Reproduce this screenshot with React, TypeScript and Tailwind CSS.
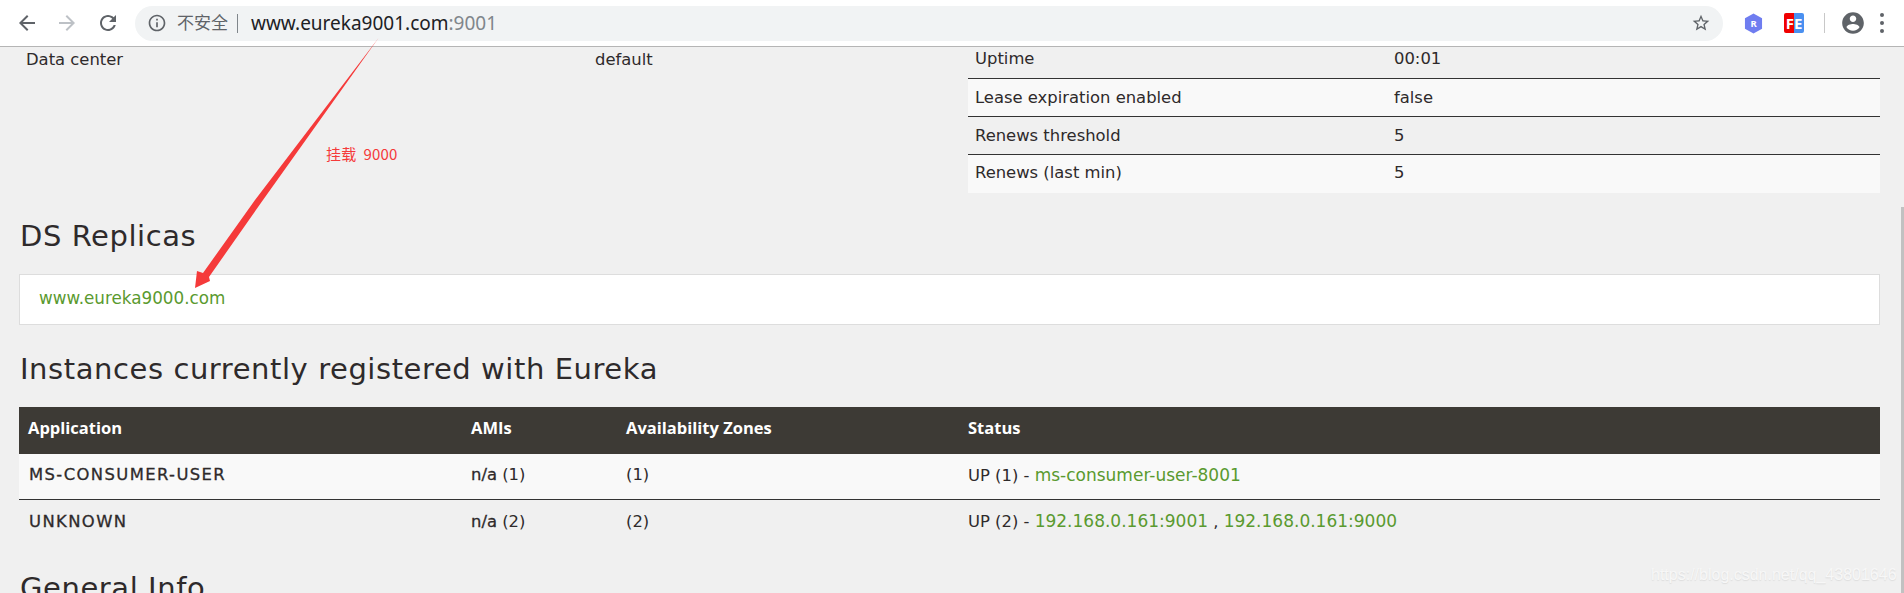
import { type ReactNode } from 'react';

const body = "font-['DejaVu_Sans','Noto_Sans_CJK_SC',sans-serif]";

function MaterialIcon({ d, className }: { d: string; className: string }) {
  return (
    <svg viewBox="0 0 24 24" className={className} fill="currentColor">
      <path d={d} />
    </svg>
  );
}

function Toolbar() {
  return (
    <div className="flex h-[47px] items-center border-b border-[#b5b5b5] bg-white font-['Noto_Sans','Noto_Sans_CJK_SC',sans-serif]">
      <div className="flex w-[135px] items-center">
        <MaterialIcon className="ml-[15px] h-6 w-6 text-[#5f6368]" d="M20 11H7.83l5.59-5.59L12 4l-8 8 8 8 1.41-1.41L7.83 13H20v-2z" />
        <MaterialIcon className="ml-[16px] h-6 w-6 text-[#bdc1c6]" d="M12 4l-1.41 1.41L16.17 11H4v2h12.17l-5.58 5.59L12 20l8-8z" />
        <MaterialIcon className="ml-[17px] h-6 w-6 text-[#5f6368]" d="M17.65 6.35C16.2 4.9 14.21 4 12 4c-4.42 0-7.99 3.58-7.99 8s3.57 8 7.99 8c3.73 0 6.84-2.55 7.73-6h-2.08c-.82 2.33-3.04 4-5.65 4-3.31 0-6-2.69-6-6s2.69-6 6-6c1.66 0 3.14.69 4.22 1.78L13 11h7V4l-2.35 2.35z" />
      </div>
      <div className="flex h-[35px] w-[1588px] items-center rounded-full bg-[#f1f3f4] pl-[12px]">
        <MaterialIcon className="h-5 w-5 text-[#5f6368]" d="M11 7h2v2h-2zm0 4h2v6h-2zm1-9C6.48 2 2 6.48 2 12s4.48 10 10 10 10-4.48 10-10S17.52 2 12 2zm0 18c-4.41 0-8-3.59-8-8s3.59-8 8-8 8 3.59 8 8-3.59 8-8 8z" />
        <span className="ml-[10px] text-[17px] text-[#5f6368]">不安全</span>
        <span className="ml-[9px] h-[19px] w-px bg-[#80868b]" />
        <span className="ml-[13px] text-[19px] text-[#202124]">
          www.eureka9001.com<span className="text-[#80868b]">:9001</span>
        </span>
        <MaterialIcon className="ml-auto mr-[12px] h-5 w-5 text-[#5f6368]" d="M22 9.24l-7.19-.62L12 2 9.19 8.63 2 9.24l5.46 4.73L5.82 21 12 17.27 18.18 21l-1.63-7.03L22 9.24zM12 15.4l-3.76 2.27 1-4.28-3.32-2.88 4.38-.38L12 6.1l1.71 4.04 4.38.38-3.32 2.88 1 4.28L12 15.4z" />
      </div>
      <svg viewBox="0 0 20 22" className="ml-[21px] h-[21px] w-[19px]">
        <path d="M10 0.5 19 5.5 V16.5 L10 21.5 1 16.5 V5.5 Z" fill="#6f7df0" />
        <text x="10" y="15" textAnchor="middle" fontSize="10" fontWeight="700" fill="#fff" fontFamily="Noto Sans">R</text>
      </svg>
      <div className="ml-[21px] flex h-5 w-5 items-center justify-center overflow-hidden rounded-[2px] bg-[linear-gradient(90deg,#f00000_0,#f00000_50%,#4a90f0_50%,#4a90f0_100%)] text-[15px] leading-none font-bold text-white">
        FE
      </div>
      <span className="ml-[20px] h-5 w-px bg-[#c8c8c8]" />
      <MaterialIcon className="ml-[15px] h-[26px] w-[26px] text-[#5f6368]" d="M12 2C6.48 2 2 6.48 2 12s4.48 10 10 10 10-4.48 10-10S17.52 2 12 2zm0 3c1.66 0 3 1.34 3 3s-1.34 3-3 3-3-1.34-3-3 1.34-3 3-3zm0 14.2c-2.5 0-4.71-1.28-6-3.22.03-1.99 4-3.08 6-3.08 1.99 0 5.97 1.09 6 3.08-1.29 1.94-3.5 3.22-6 3.22z" />
      <div className="ml-[14px] flex flex-col gap-[4px]">
        <span className="h-[4px] w-[4px] rounded-full bg-[#5f6368]" />
        <span className="h-[4px] w-[4px] rounded-full bg-[#5f6368]" />
        <span className="h-[4px] w-[4px] rounded-full bg-[#5f6368]" />
      </div>
    </div>
  );
}

function StatRow({ label, value, shaded, className = 'h-[38px] pt-px', last }: { label: string; value: string; shaded?: boolean; className?: string; last?: boolean }) {
  return (
    <div className={`flex items-center ${className} ${shaded ? 'bg-[#f9f9f9]' : ''} ${last ? '' : 'border-b border-[#333]'}`}>
      <span className="w-[426px] pl-[7px]">{label}</span>
      <span>{value}</span>
    </div>
  );
}

function Heading({ children, className }: { children: ReactNode; className: string }) {
  return <h2 className={`pl-px text-[29px] leading-[34px] tracking-[0.57px] text-[#2e2a2b] ${className}`}>{children}</h2>;
}

function Link({ children }: { children: ReactNode }) {
  return <a className="text-[#5a9a2f]">{children}</a>;
}

function InstanceRow({ app, ami, zones, children, shaded }: { app: string; ami: string; zones: string; children: ReactNode; shaded?: boolean }) {
  return (
    <div className={`flex h-[46px] items-center pb-[2px] ${shaded ? 'border-b border-[#333] bg-[#f9f9f9]' : ''}`}>
      <span className="w-[452px] pl-[10px] tracking-[1.4px] [-webkit-text-stroke:0.3px]">{app}</span>
      <span className="w-[155px]">
        <span className="[-webkit-text-stroke:0.3px]">n/a</span> {ami}
      </span>
      <span className="w-[342px]">{zones}</span>
      <span className="[&_a]:text-[17px]">{children}</span>
    </div>
  );
}

function Arrow() {
  return (
    <svg className="pointer-events-none absolute top-0 left-0 h-[593px] w-[1904px]" viewBox="0 0 1904 593">
      <path d="M378.5 38 L263 200 L209 277 L210 281 L195 288 L197 271 L203 273 L255 200 Z" fill="#f53a3a" />
    </svg>
  );
}

export default function App() {
  return (
    <div className={`relative h-[593px] w-[1904px] overflow-hidden bg-[#f0f0f0] text-[16.4px] text-[#2e2a2b] ${body}`}>
      <Toolbar />
      <div className="w-[1880px] pl-[19px]">
        <div className="flex">
          <div className="w-[949px]">
            <div className="flex h-[32px] items-center pb-[6px] pl-[7px]">
              <span className="w-[569px]">Data center</span>
              <span>default</span>
            </div>
          </div>
          <div className="w-[912px]">
            <StatRow label="Uptime" value="00:01" className="h-[32px] pb-[6px]" />
            <StatRow label="Lease expiration enabled" value="false" shaded />
            <StatRow label="Renews threshold" value="5" />
            <StatRow label="Renews (last min)" value="5" shaded last className="h-[38px] pb-px" />
          </div>
        </div>
        <Heading className="mt-[26px]">DS Replicas</Heading>
        <div className="mt-[21px] flex h-[51px] items-center border border-[#ddd] bg-white pb-[2px] pl-[19px] text-[16.8px]">
          <Link>www.eureka9000.com</Link>
        </div>
        <Heading className="mt-[27px]">Instances currently registered with Eureka</Heading>
        <div className="mt-[21px]">
          <div className="flex h-[47px] items-center bg-[#3d3a35] pb-[4px] font-['Open_Sans'] text-[16.5px] font-bold text-white">
            <span className="w-[452px] pl-[9px]">Application</span>
            <span className="w-[155px]">AMIs</span>
            <span className="w-[342px]">Availability Zones</span>
            <span>Status</span>
          </div>
          <InstanceRow app="MS-CONSUMER-USER" ami="(1)" zones="(1)" shaded>
            UP (1) - <Link>ms-consumer-user-8001</Link>
          </InstanceRow>
          <InstanceRow app="UNKNOWN" ami="(2)" zones="(2)">
            UP (2) - <Link>192.168.0.161:9001</Link> , <Link>192.168.0.161:9000</Link>
          </InstanceRow>
        </div>
        <Heading className="mt-[25px]">General Info</Heading>
      </div>
      <Arrow />
      <span className="absolute top-[143px] left-[326px] font-['Noto_Sans_CJK_SC'] text-[15px] tracking-[0.2px] text-[#f53a3a]">挂载&nbsp;&nbsp;9000</span>
      <span className="absolute top-[563px] left-[1651px] font-['Liberation_Sans'] text-[16px] text-[#f7f7f7] [text-shadow:0_1px_1px_#dcdcdc]">https://blog.csdn.net/qq_43801646</span>
      <div className="absolute top-[207px] right-0 h-[386px] w-[3px] bg-[#c1c1c1]" />
    </div>
  );
}
